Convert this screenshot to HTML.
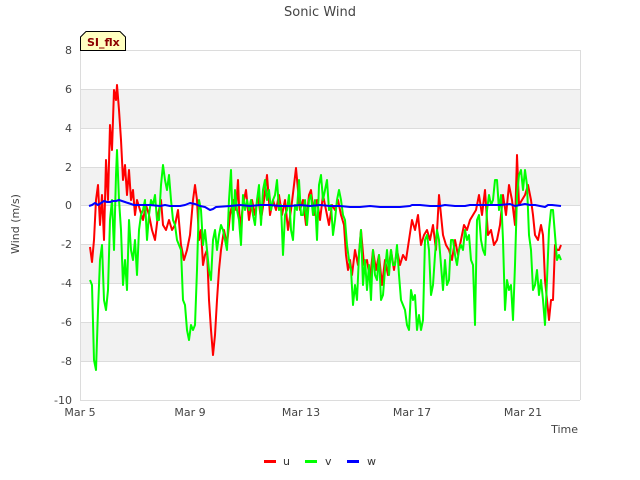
<!DOCTYPE html>
<html><head><style>body{margin:0;background:#fff}svg{display:block;font-family:"DejaVu Sans","Liberation Sans",sans-serif}</style></head><body>
<svg width="640" height="480" viewBox="0 0 640 480">
<rect x="80" y="89" width="500" height="39" fill="#f2f2f2"/>
<rect x="80" y="167" width="500" height="38.5" fill="#f2f2f2"/>
<rect x="80" y="244" width="500" height="39" fill="#f2f2f2"/>
<rect x="80" y="322" width="500" height="39" fill="#f2f2f2"/>
<g stroke="#dcdcdc" stroke-width="1">
<line x1="80" y1="50.5" x2="580" y2="50.5"/><line x1="80" y1="89.5" x2="580" y2="89.5"/><line x1="80" y1="128.5" x2="580" y2="128.5"/><line x1="80" y1="167.5" x2="580" y2="167.5"/><line x1="80" y1="205.5" x2="580" y2="205.5"/><line x1="80" y1="244.5" x2="580" y2="244.5"/><line x1="80" y1="283.5" x2="580" y2="283.5"/><line x1="80" y1="322.5" x2="580" y2="322.5"/><line x1="80" y1="361.5" x2="580" y2="361.5"/>
<line x1="80.5" y1="50" x2="80.5" y2="400"/><line x1="580.5" y1="50" x2="580.5" y2="400"/><line x1="80" y1="400.5" x2="580" y2="400.5"/>
</g>
<g font-size="11" fill="#444" text-anchor="end">
<text x="72" y="54">8</text><text x="72" y="93">6</text><text x="72" y="132">4</text><text x="72" y="171">2</text><text x="72" y="209">0</text><text x="72" y="248">-2</text><text x="72" y="287">-4</text><text x="72" y="326">-6</text><text x="72" y="365">-8</text><text x="72" y="404">-10</text>
</g>
<g font-size="11" fill="#444" text-anchor="middle">
<text x="80" y="416">Mar 5</text><text x="190" y="416">Mar 9</text><text x="301" y="416">Mar 13</text><text x="412" y="416">Mar 17</text><text x="523" y="416">Mar 21</text>
</g>
<text x="578" y="433" font-size="11" fill="#444" text-anchor="end">Time</text>
<text x="320" y="16" font-size="13" fill="#444" text-anchor="middle">Sonic Wind</text>
<text transform="translate(19,224) rotate(-90)" font-size="11" fill="#444" text-anchor="middle">Wind (m/s)</text>
<polyline fill="none" stroke="#ff0000" stroke-width="2" stroke-linejoin="round" points="90,247 92,262 94,240 96,200 98,185 100,225 102,195 104,240 106,160 108,200 110,125 112,150 114,90 116,100 117,85 119,110 121,140 123,180 125,165 127,195 129,170 131,200 133,190 135,215 137,200 140,210 143,220 146,205 149,215 152,230 155,240 158,215 161,200 163,225 166,230 169,220 172,230 175,225 178,210 181,245 184,260 187,250 190,235 193,200 195,185 197,200 199,240 201,230 203,265 205,255 207,250 209,300 211,330 213,355 215,335 217,300 219,270 221,250 224,230 227,245 230,215 233,200 236,210 238,180 240,230 243,205 246,190 249,220 252,200 255,215 258,195 261,220 264,200 267,175 270,215 273,200 276,210 279,195 282,215 285,200 288,230 291,210 294,185 296,168 298,190 300,210 303,200 306,225 309,195 311,190 314,215 317,200 320,220 323,195 326,210 329,225 332,205 335,210 338,200 341,215 344,225 346,255 348,270 350,260 352,275 355,250 358,265 361,230 364,265 367,260 370,280 373,250 376,270 379,255 382,285 385,260 388,275 391,250 394,270 397,250 400,265 403,255 406,260 409,240 412,220 415,230 418,215 421,245 424,235 427,230 430,240 433,225 436,250 439,195 441,215 443,235 446,245 449,250 452,260 455,240 458,255 461,240 464,225 467,230 470,220 473,215 476,210 479,195 482,215 485,190 488,235 491,230 494,245 497,240 500,225 503,195 506,215 509,185 512,200 515,225 517,155 519,205 522,200 525,195 528,185 531,200 533,215 535,235 538,240 541,225 543,235 545,280 547,300 549,320 551,300 553,300 555,245 557,250 559,250 561,245"/>
<polyline fill="none" stroke="#00ff00" stroke-width="2" stroke-linejoin="round" points="90,280 92,285 94,360 96,370 98,310 100,260 102,245 104,300 106,310 108,290 110,220 112,200 114,250 116,175 117,150 119,200 121,230 123,285 125,260 127,290 129,220 131,250 133,260 135,240 137,275 139,230 141,215 143,210 145,200 147,240 149,215 151,200 153,205 155,195 157,220 159,220 161,185 163,165 165,180 167,190 169,175 171,200 173,220 175,225 177,240 179,245 181,250 183,300 185,305 187,330 189,340 191,325 193,330 195,325 197,270 199,200 201,210 203,245 205,230 207,250 209,270 211,280 213,240 215,230 217,250 219,235 221,225 223,230 225,240 227,250 229,200 231,170 233,230 235,190 237,210 239,220 241,245 243,195 245,210 247,200 249,210 251,200 253,215 255,225 257,200 259,185 261,225 263,190 265,180 267,200 269,190 271,210 273,200 275,195 277,180 279,210 281,205 283,255 285,215 287,210 289,195 291,230 293,240 295,205 297,210 299,180 301,215 303,215 305,200 307,225 309,200 311,195 313,215 315,200 317,240 319,185 321,175 323,200 325,190 327,180 329,210 331,205 333,235 335,220 337,200 339,190 341,200 343,215 345,220 347,245 349,260 351,270 353,305 355,285 357,300 359,255 361,230 363,285 365,260 367,290 369,265 371,300 373,250 375,275 377,280 379,255 381,300 383,295 385,270 387,250 389,275 391,250 393,265 395,265 397,245 399,275 401,300 403,305 405,310 407,325 409,330 411,290 413,300 415,295 417,330 419,315 421,330 423,320 425,240 427,235 429,250 431,295 433,285 435,255 437,230 439,240 441,265 443,290 445,260 447,285 449,280 451,240 453,240 455,255 457,265 459,250 461,245 463,250 465,230 467,240 469,235 471,260 473,265 475,325 477,220 479,215 481,240 483,250 485,255 487,210 489,195 491,205 493,200 495,180 497,180 499,210 501,195 503,240 505,310 507,280 509,290 511,285 513,320 515,265 517,195 519,175 521,170 523,190 525,170 527,185 529,235 531,250 533,290 535,285 537,270 539,295 541,280 543,300 545,325 547,280 549,230 551,210 553,210 555,235 557,260 559,255 561,260"/>
<polyline fill="none" stroke="#0000ff" stroke-width="2" stroke-linejoin="round" points="89,206 92,205 95,203 98,205 101,203 104,201 107,202 110,202 113,201 116,201 119,200 122,201 125,202 128,203 131,204 134,205 140,205 150,205 160,206 165,205 170,206 180,206 185,205 190,203 195,204 200,206 205,207 210,210 213,209 216,207 230,206 240,205 250,206 260,205 270,205 280,206 290,206 300,205 310,206 320,205 330,206 340,206 350,207 360,207 370,206 380,207 390,207 400,207 410,206 412,205 420,205 430,206 440,206 445,205 455,206 465,206 470,205 480,205 490,205 500,205 510,204 515,206 520,205 525,204 530,205 535,205 540,206 545,207 548,205 552,205 561,206"/>
<path d="M80.5,50.5 V37 L86,31.5 H120 L125.5,37 V50.5 Z" fill="#ffffc0" stroke="#000" stroke-width="1"/>
<text x="87" y="46" font-size="11" font-weight="bold" fill="#8b0000">SI_flx</text>
<g font-size="11" fill="#333">
<line x1="264" y1="461.5" x2="276" y2="461.5" stroke="#ff0000" stroke-width="3"/><text x="283" y="465">u</text>
<line x1="305" y1="461.5" x2="317" y2="461.5" stroke="#00ff00" stroke-width="3"/><text x="325" y="465">v</text>
<line x1="347" y1="461.5" x2="359" y2="461.5" stroke="#0000ff" stroke-width="3"/><text x="367" y="465">w</text>
</g>
</svg>
</body></html>
